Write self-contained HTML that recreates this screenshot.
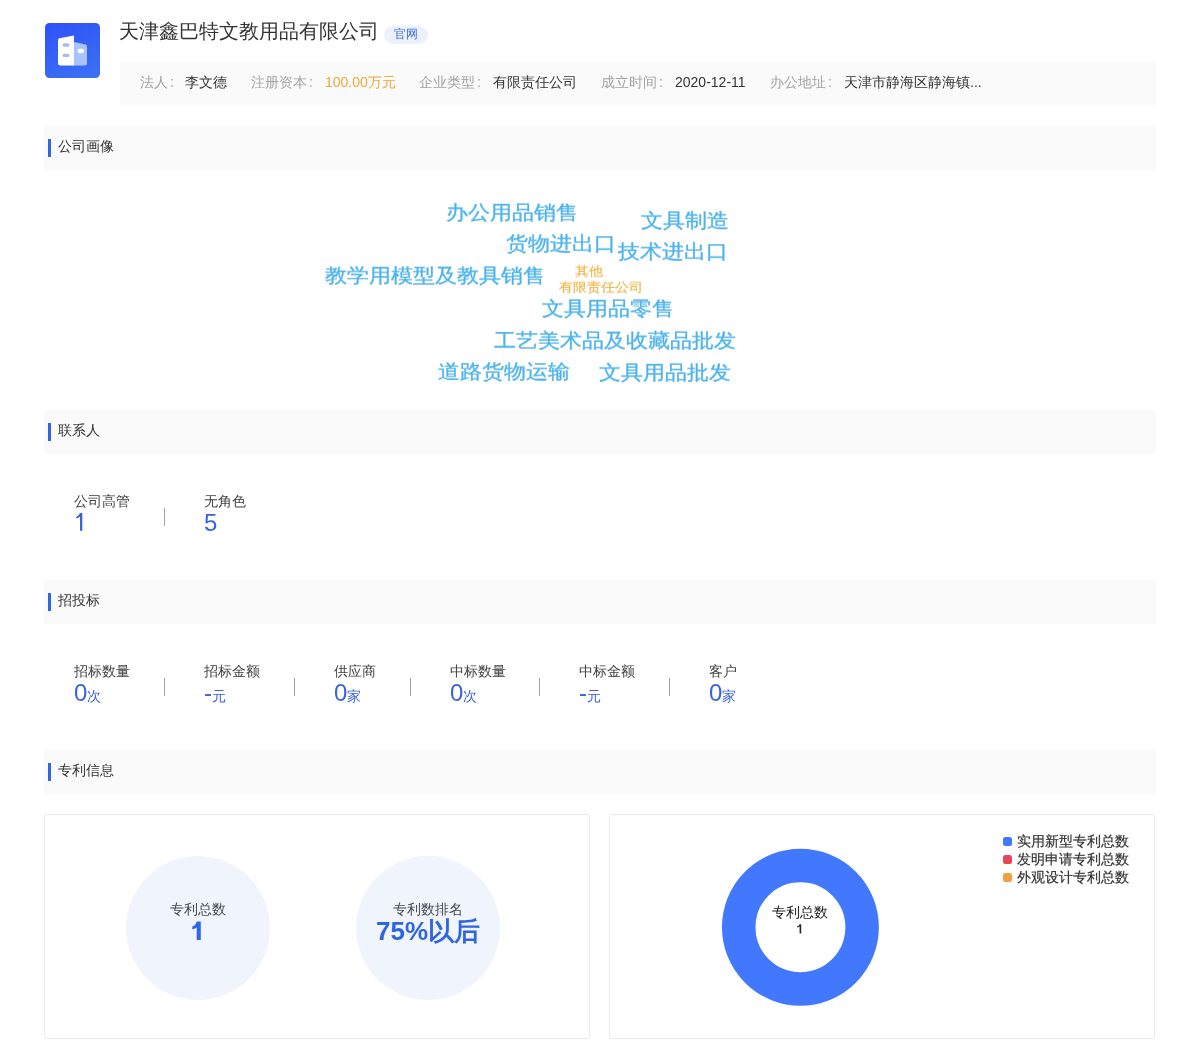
<!DOCTYPE html>
<html><head><meta charset="utf-8">
<style>
*{margin:0;padding:0;box-sizing:border-box}
html,body{width:1200px;height:1061px;background:#fff;overflow:hidden}
body{position:relative;font-family:"Liberation Sans",sans-serif;color:#333}
.a{position:absolute;white-space:nowrap;line-height:1;will-change:transform}
.logo{position:absolute;left:45px;top:23px;width:55px;height:55px;border-radius:4.5px;background:linear-gradient(160deg,#2f52f6,#3b72f4)}
.title{left:119px;top:21px;font-size:20px;color:#333}
.badge{position:absolute;left:384px;top:26px;width:44px;height:18px;border-radius:9px;background:#ecf2fd;color:#3d6ae0;font-size:11.5px;line-height:16.5px;text-align:center;will-change:transform}
.infobar{position:absolute;left:120px;top:62px;width:1036px;height:43px;background:#fafafa}
.lab{font-size:14px;color:#a3a3a3}
.val{font-size:14px;color:#333}
.sec{position:absolute;left:44px;width:1112px;height:44px;background:#fafafa}
.sec i{position:absolute;left:4px;top:13px;width:3px;height:18px;background:#2f66e8}
.sec span{position:absolute;left:14px;top:14px;font-size:13.7px;line-height:14px;color:#333;will-change:transform}
.wc{position:absolute;white-space:nowrap;line-height:1;font-size:22px;color:#4db3ec;-webkit-text-stroke:0.35px #4db3ec;will-change:transform;transform:scaleY(0.89)}
.wo{position:absolute;white-space:nowrap;line-height:1;font-size:14px;color:#f0b54a;-webkit-text-stroke:0.2px #f0b54a;will-change:transform;transform:scaleY(0.9)}
.cl{font-size:14px;color:#404040}
.cn{font-size:24px;color:#3a62dc}
.cu{font-size:14px;color:#3a62dc}
.dv{position:absolute;width:1px;height:18px;background:#a3a3a3}
.card{position:absolute;top:814px;width:546px;height:225px;border:1px solid #ebebeb;border-radius:2px}
.circ{position:absolute;top:856px;width:144px;height:144px;border-radius:50%;background:#f0f4fd}
</style></head><body>
<div class="logo">
<svg width="55" height="55" viewBox="0 0 55 55" style="position:absolute;left:0;top:0">
<path d="M13 17 Q13 15.5 14.5 15.2 L29 12.5 L29 42.5 L15.5 42.5 Q13 42.5 13 40 Z" fill="#fff"/>
<path d="M29 19 L40.5 21.5 Q42 22 42 23.5 L42 40 Q42 42.5 39.5 42.5 L29 42.5 Z" fill="#a9c4fb"/>
<rect x="17.5" y="20.3" width="7" height="3.4" rx="1.7" fill="#a8b9f4"/>
<rect x="17.5" y="30.7" width="7" height="3.4" rx="1.7" fill="#a8b9f4"/>
<rect x="32.5" y="25.8" width="6.5" height="4.4" rx="2.2" fill="#fff"/>
</svg>
</div>
<div class="a title">天津鑫巴特文教用品有限公司</div>
<div class="badge">官网</div>
<div class="infobar"></div>
<div class="a lab" style="left:140px;top:75px">法人<span style="margin-left:2px">:</span></div>
<div class="a val" style="left:185px;top:75px">李文德</div>
<div class="a lab" style="left:251px;top:75px">注册资本<span style="margin-left:2px">:</span></div>
<div class="a val" style="left:325px;top:75px;color:#e9a93a">100.00万元</div>
<div class="a lab" style="left:419px;top:75px">企业类型<span style="margin-left:2px">:</span></div>
<div class="a val" style="left:493px;top:75px">有限责任公司</div>
<div class="a lab" style="left:601px;top:75px">成立时间<span style="margin-left:2px">:</span></div>
<div class="a val" style="left:675px;top:75px">2020-12-11</div>
<div class="a lab" style="left:770px;top:75px">办公地址<span style="margin-left:2px">:</span></div>
<div class="a val" style="left:844px;top:75px">天津市静海区静海镇...</div>

<div class="sec" style="top:126px"><i></i><span>公司画像</span></div>
<div class="wc" style="left:445.5px;top:202px">办公用品销售</div>
<div class="wc" style="left:641px;top:210px">文具制造</div>
<div class="wc" style="left:506px;top:233px">货物进出口</div>
<div class="wc" style="left:618px;top:240.5px">技术进出口</div>
<div class="wc" style="left:325px;top:265px">教学用模型及教具销售</div>
<div class="wo" style="left:574.5px;top:264px">其他</div>
<div class="wo" style="left:558.5px;top:280px">有限责任公司</div>
<div class="wc" style="left:542px;top:298px">文具用品零售</div>
<div class="wc" style="left:494px;top:330px">工艺美术品及收藏品批发</div>
<div class="wc" style="left:437.5px;top:361px">道路货物运输</div>
<div class="wc" style="left:599px;top:362px">文具用品批发</div>

<div class="sec" style="top:410px"><i></i><span>联系人</span></div>
<div class="a cl" style="left:74px;top:494px">公司高管</div>
<svg style="position:absolute;left:70px;top:508px" width="20" height="28"><path d="M10 5 L12.3 5 L12.3 22.8 L10 22.8 L10 8.6 Q8.6 9.9 6.2 10.6 L6.2 8.9 Q8.8 8 10 5 Z" fill="#3a62dc"/></svg>
<div class="dv" style="left:164px;top:508px"></div>
<div class="a cl" style="left:204px;top:494px">无角色</div>
<div class="a cn" style="left:204px;top:511px">5</div>

<div class="sec" style="top:580px"><i></i><span>招投标</span></div>
<div class="a cl" style="left:74px;top:664px">招标数量</div>
<div class="a" style="left:74px;top:681px"><span class="cn">0</span><span class="cu">次</span></div>
<div class="dv" style="left:164px;top:678px"></div>
<div class="a cl" style="left:204px;top:664px">招标金额</div>
<div class="a" style="left:204px;top:681px"><span class="cn">-</span><span class="cu">元</span></div>
<div class="dv" style="left:294px;top:678px"></div>
<div class="a cl" style="left:334px;top:664px">供应商</div>
<div class="a" style="left:334px;top:681px"><span class="cn">0</span><span class="cu">家</span></div>
<div class="dv" style="left:410px;top:678px"></div>
<div class="a cl" style="left:450px;top:664px">中标数量</div>
<div class="a" style="left:450px;top:681px"><span class="cn">0</span><span class="cu">次</span></div>
<div class="dv" style="left:539px;top:678px"></div>
<div class="a cl" style="left:579px;top:664px">中标金额</div>
<div class="a" style="left:579px;top:681px"><span class="cn">-</span><span class="cu">元</span></div>
<div class="dv" style="left:669px;top:678px"></div>
<div class="a cl" style="left:709px;top:664px">客户</div>
<div class="a" style="left:709px;top:681px"><span class="cn">0</span><span class="cu">家</span></div>

<div class="sec" style="top:750px"><i></i><span>专利信息</span></div>
<div class="card" style="left:44px"></div>
<div class="card" style="left:609px"></div>
<div class="circ" style="left:126px"></div>
<div class="a" style="left:126px;top:902px;width:144px;text-align:center;font-size:14px;color:#434a56">专利总数</div>
<svg style="position:absolute;left:186px;top:915px" width="20" height="30"><path d="M10.7 6.5 L14.8 6.5 L14.8 25 L10.7 25 L10.7 12.6 Q8.8 14 6.3 14.3 L6.3 11.4 Q9.8 10.4 10.7 6.5 Z" fill="#2f68e6"/></svg>
<div class="circ" style="left:356px"></div>
<div class="a" style="left:356px;top:902px;width:144px;text-align:center;font-size:14px;color:#434a56">专利数排名</div>
<div class="a" style="left:356px;top:918px;width:144px;text-align:center;font-size:26px;font-weight:bold;color:#2f66e0">75%以后</div>

<svg style="position:absolute;left:700px;top:827px" width="200" height="200" viewBox="0 0 200 200">
<circle cx="100.4" cy="100.2" r="61.7" fill="none" stroke="#4178fd" stroke-width="33.5"/>
</svg>
<div class="a" style="left:700px;top:906px;width:200px;text-align:center;font-size:13.6px;color:#1a1a1a">专利总数</div>
<svg style="position:absolute;left:790px;top:920px" width="20" height="18"><path d="M9.6 4.3 L11.2 4.3 L11.2 13.6 L9.6 13.6 L9.6 6.6 Q8.7 7.3 7 7.6 L7 6.5 Q9 6 9.6 4.3 Z" fill="#222"/></svg>

<div style="position:absolute;left:1003px;top:837px;width:9px;height:9px;border-radius:2.5px;background:#4178fd"></div>
<div style="position:absolute;left:1003px;top:855px;width:9px;height:9px;border-radius:2.5px;background:#e8455a"></div>
<div style="position:absolute;left:1003px;top:873px;width:9px;height:9px;border-radius:2.5px;background:#f0a040"></div>
<div class="a" style="left:1017px;top:834px;font-size:14px;color:#333;-webkit-text-stroke:0.2px #333">实用新型专利总数</div>
<div class="a" style="left:1017px;top:852px;font-size:14px;color:#333;-webkit-text-stroke:0.2px #333">发明申请专利总数</div>
<div class="a" style="left:1017px;top:870px;font-size:14px;color:#333;-webkit-text-stroke:0.2px #333">外观设计专利总数</div>
</body></html>
